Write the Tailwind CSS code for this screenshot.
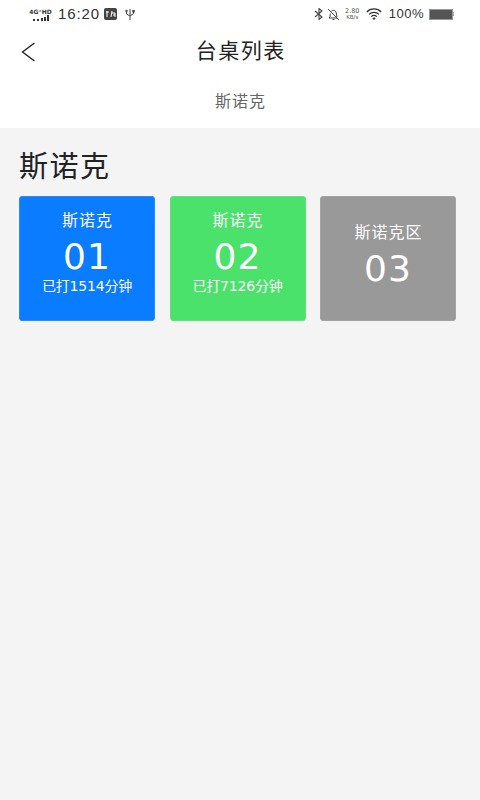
<!DOCTYPE html>
<html lang="zh">
<head>
  <meta charset="UTF-8" />
  <meta name="viewport" content="width=device-width, initial-scale=1.0" />
  <title>台桌列表</title>
  <script src="https://cdn.jsdelivr.net/npm/@tailwindcss/browser@4"></script>
</head>
<body class="bg-[#f4f4f4] h-[800px] overflow-hidden font-['DejaVu_Sans','Noto_Sans_CJK_SC',sans-serif] text-[#222]">
  <!-- status bar -->
  <div class="bg-white h-7 flex items-center justify-between pl-[28px] pr-[26px] text-[#333]">
    <div class="flex items-center">
      <div class="flex flex-col items-center w-[25px] leading-none">
        <span class="text-[6px] leading-[7px] font-bold whitespace-nowrap">4G⁺HD</span>
        <svg width="18" height="6" viewBox="0 0 18 6" fill="#333"><rect x="1" y="4" width="2" height="2"/><rect x="5" y="4" width="2" height="2"/><rect x="9" y="3" width="2" height="3"/><rect x="12" y="2" width="2" height="4"/><rect x="15" y="0" width="2" height="6"/></svg>
      </div>
      <span class="ml-[5px] text-[15px] tracking-[0.9px] font-['Liberation_Sans']">16:20</span>
      <svg class="ml-[4px]" width="13" height="12" viewBox="0 0 13 12"><rect width="13" height="12" rx="2" fill="#444"/><path d="M3 3v6M5 4H2M8 3l-1 6M8 5h3v4M9 7h2" stroke="#fff" stroke-width="1" fill="none"/></svg>
      <svg class="ml-[8px]" width="10" height="13" viewBox="0 0 10 13" fill="none" stroke="#444" stroke-width="1"><path d="M5 1v11M1.500 3.500v2.500l3.500 2 3.500-2.500V3.500"/><circle cx="1.500" cy="3" r="0.800" fill="#444"/><rect x="7.800" y="2.500" width="1.400" height="1.400" fill="#444"/></svg>
    </div>
    <div class="flex items-center">
      <svg width="10" height="12" viewBox="0 0 10 12" fill="none" stroke="#444" stroke-width="1.100"><path d="M1 3l7 6-3 2.500V.5l3 2.500-7 6"/></svg>
      <svg class="ml-[3px]" width="13" height="13" viewBox="0 0 13 13" fill="none" stroke="#444" stroke-width="1"><path d="M1 1l11 11M4 3.500C5 2 8 1.500 9 4l1 5M3.300 5.500 3 9l-1 1h8M5.500 11.500h2"/></svg>
      <div class="ml-[4px] w-[17px] flex flex-col items-center leading-none text-[6.500px] text-[#555]"><span class="leading-[6px]">2.80</span><span class="leading-[6px] text-[5.500px]">KB/s</span></div>
      <svg class="ml-[5px]" width="16" height="12" viewBox="0 0 16 12" fill="none" stroke="#333" stroke-width="1.300"><path d="M.8 4a10 10 0 0 1 14.400 0M3 6.400a7 7 0 0 1 10 0M5.200 8.600a4 4 0 0 1 5.600 0"/><path d="M8 12l-1.700-1.700a2.400 2.400 0 0 1 3.400 0z" fill="#333" stroke="none"/></svg>
      <span class="ml-[7px] text-[13px] tracking-[0.5px] font-['Liberation_Sans']">100%</span>
      <div class="ml-[5px] flex items-center">
        <div class="w-[24px] h-[11px] bg-[#555] border border-[#999]"></div>
        <div class="w-[1px] h-[4px] bg-[#aaa]"></div>
      </div>
    </div>
  </div>

  <!-- nav -->
  <header class="bg-white h-[50px] relative flex items-center justify-center">
    <svg class="absolute left-[21px] top-[14px]" width="15" height="20" viewBox="0 0 15 20" fill="none" stroke="#222" stroke-width="1.400"><path d="M13.500 1 1.500 10l12 9"/></svg>
    <h1 class="text-[21px] leading-none mt-[-3px] tracking-[1.500px] mr-[-1.500px]">台桌列表</h1>
  </header>

  <!-- tabs -->
  <div class="bg-white h-[50px] flex items-start justify-center pt-[15px]">
    <span class="text-[16px] leading-[17px] tracking-[1px] mr-[-1px] text-[#666]">斯诺克</span>
  </div>

  <main class="px-[19px]">
    <h2 class="text-[29px] leading-[30px] mt-[24px] mb-[14px] tracking-[1.500px]">斯诺克</h2>
    <div class="flex gap-[14.500px]">
      <div class="w-[136px] h-[125px] rounded-[3px] bg-[#0a7cff] border border-[#2a8cf5] text-white flex flex-col items-center pt-[15px]">
        <span class="text-[16px] leading-[18px] tracking-[1px] mr-[-1px]">斯诺克</span>
        <span class="text-[36px] leading-[44px] mt-[5px] tracking-[1px]">01</span>
        <span class="text-[14px] leading-[15px] tracking-[-0.200px] whitespace-nowrap">已打1514分钟</span>
      </div>
      <div class="w-[136px] h-[125px] rounded-[3px] bg-[#4ae26b] border border-[#5fe47c] text-white flex flex-col items-center pt-[15px]">
        <span class="text-[16px] leading-[18px] tracking-[1px] mr-[-1px]">斯诺克</span>
        <span class="text-[36px] leading-[44px] mt-[5px] tracking-[1px]">02</span>
        <span class="text-[14px] leading-[15px] tracking-[-0.200px] whitespace-nowrap">已打7126分钟</span>
      </div>
      <div class="w-[136px] h-[125px] rounded-[3px] bg-[#999999] border border-[#a2a2a2] text-white flex flex-col items-center pt-[27px]">
        <span class="text-[16px] leading-[18px] tracking-[1px] mr-[-1px]">斯诺克区</span>
        <span class="text-[36px] leading-[44px] mt-[5px] tracking-[1px]">03</span>
      </div>
    </div>
  </main>
</body>
</html>
